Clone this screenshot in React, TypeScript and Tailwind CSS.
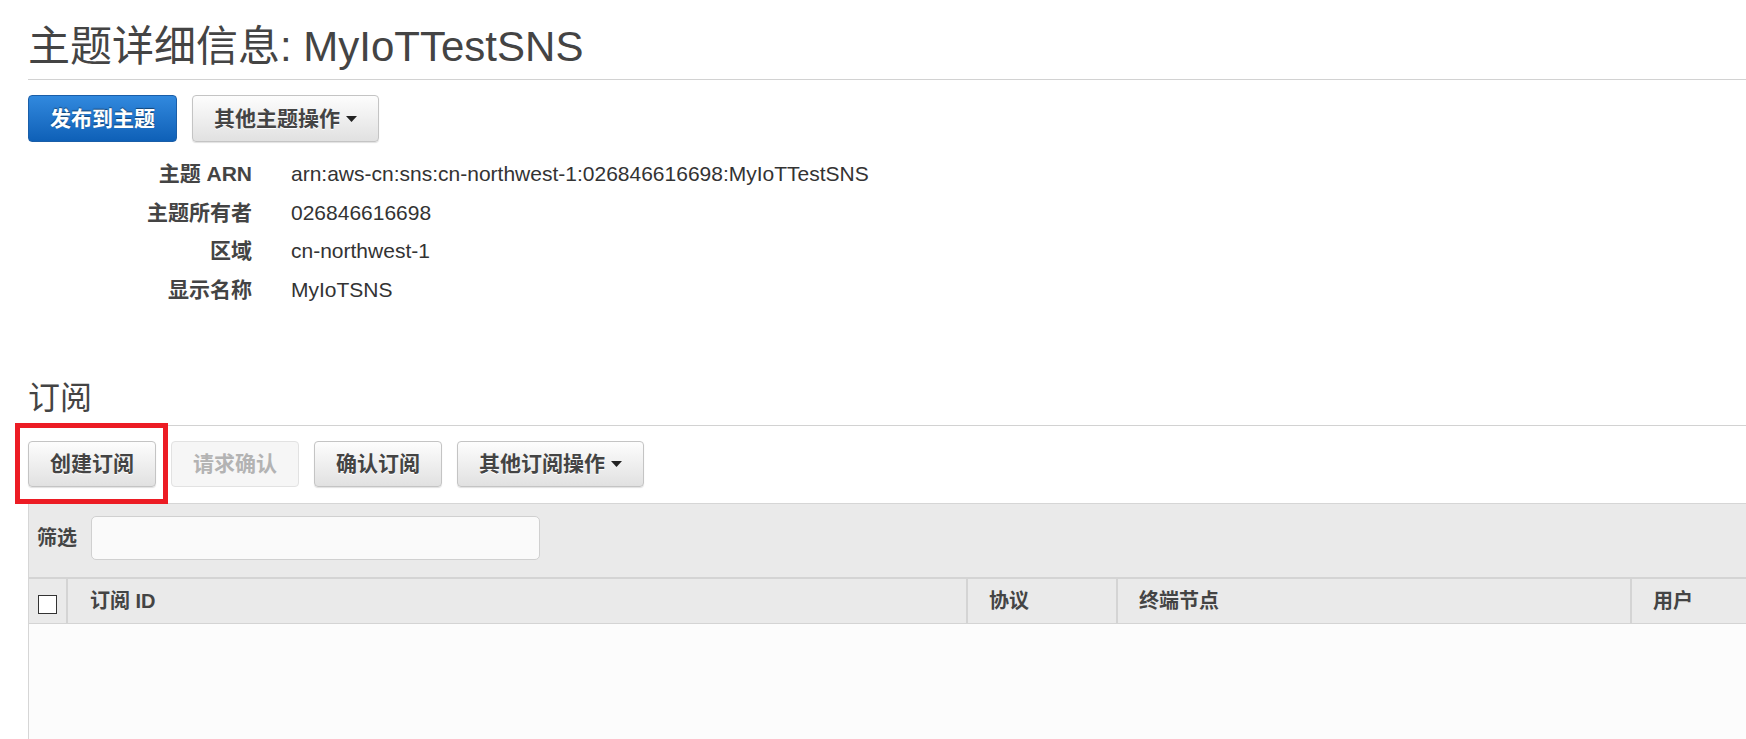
import React from 'react';

const Caret = () => (
  <svg width="11" height="6" viewBox="0 0 11 6" className="ml-[6px]">
    <polygon points="0,0 11,0 5.5,6" fill="#222" />
  </svg>
);

const GrayButton = ({ children, caret = false }: { children: React.ReactNode; caret?: boolean }) => (
  <button className="flex h-full items-center rounded-[4px] border border-[#c4c4c4] bg-gradient-to-b from-[#fdfdfd] to-[#e1e1e1] px-[21px] text-[21px] font-bold text-[#444] shadow-[0_1px_1px_rgba(0,0,0,0.12)] [text-shadow:0_1px_0_#fff]">
    {children}
    {caret && <Caret />}
  </button>
);

const details = [
  ['主题 ARN', 'arn:aws-cn:sns:cn-northwest-1:026846616698:MyIoTTestSNS'],
  ['主题所有者', '026846616698'],
  ['区域', 'cn-northwest-1'],
  ['显示名称', 'MyIoTSNS'],
];

const App = () => {
  return (
    <div className="min-h-screen overflow-hidden bg-white pl-[28px] pt-[25px] font-['Liberation_Sans','Noto_Sans_CJK_SC',sans-serif] text-[#444]">
      {/* Topic header */}
      <h1 className="text-[42px] font-normal leading-[44px] text-[#444]">主题详细信息: MyIoTTestSNS</h1>
      <div className="mt-[10px] h-px bg-[#d2d2d2]" />

      <div className="mt-[15px] flex h-[47px] gap-[15px]">
        <button className="flex h-full items-center rounded-[4px] border border-[#1a5ea8] bg-gradient-to-b from-[#3189de] to-[#0e60b7] px-[21px] text-[21px] font-bold text-white [text-shadow:0_-1px_1px_rgba(0,0,0,0.45)]">
          发布到主题
        </button>
        <GrayButton caret>其他主题操作</GrayButton>
      </div>

      <dl className="mt-[13px]">
        {details.map(([label, value]) => (
          <div key={label} className="flex text-[21px] leading-[38.5px]">
            <dt className="w-[224px] text-right font-bold text-[#444]">{label}</dt>
            <dd className="ml-[39px] text-[#333]">{value}</dd>
          </div>
        ))}
      </dl>

      {/* Subscriptions */}
      <h2 className="mt-[69px] text-[32px] font-normal leading-[40px] text-[#444]">订阅</h2>
      <div className="mt-[7px] h-px bg-[#d2d2d2]" />

      <div className="relative mt-[15px] flex h-[46px] gap-[15px]">
        <GrayButton>创建订阅</GrayButton>
        <button className="flex h-full items-center rounded-[4px] border border-[#e2e2e2] bg-[#f6f6f6] px-[21px] text-[21px] font-bold text-[#b3b3b3]">
          请求确认
        </button>
        <GrayButton>确认订阅</GrayButton>
        <GrayButton caret>其他订阅操作</GrayButton>
        <div className="absolute left-[-13px] top-[-18px] h-[81px] w-[153px] border-[5px] border-[#ec1c24]" />
      </div>

      <div className="mt-[16px] border-l border-t border-[#d6d6d6] bg-[#eaeaea]">
        <div className="flex items-center pb-[17px] pl-[8px] pt-[12px]">
          <span className="text-[20px] font-bold text-[#444]">筛选</span>
          <input className="ml-[14px] h-[44px] w-[449px] rounded-[5px] border border-[#d0d0d0] bg-[#fafafa] outline-none" />
        </div>

        <div className="flex h-[47px] border-b border-t-2 border-[#d4d4d4] text-[20px] font-bold text-[#444]">
          <div className="flex w-[39px] items-center justify-center border-r-2 border-[#d4d4d4]">
            <div className="mt-[6px] h-[19px] w-[19px] border border-[#333] bg-white" />
          </div>
          <div className="flex w-[900px] items-center border-r-2 border-[#d4d4d4] pl-[22px]">订阅 ID</div>
          <div className="flex w-[150px] items-center border-r-2 border-[#d4d4d4] pl-[21px]">协议</div>
          <div className="flex w-[514px] items-center border-r-2 border-[#d4d4d4] pl-[21px]">终端节点</div>
          <div className="flex flex-1 items-center pl-[21px]">用户</div>
        </div>

        <div className="h-[200px] bg-[#fcfcfc]" />
      </div>
    </div>
  );
};

export default App;
